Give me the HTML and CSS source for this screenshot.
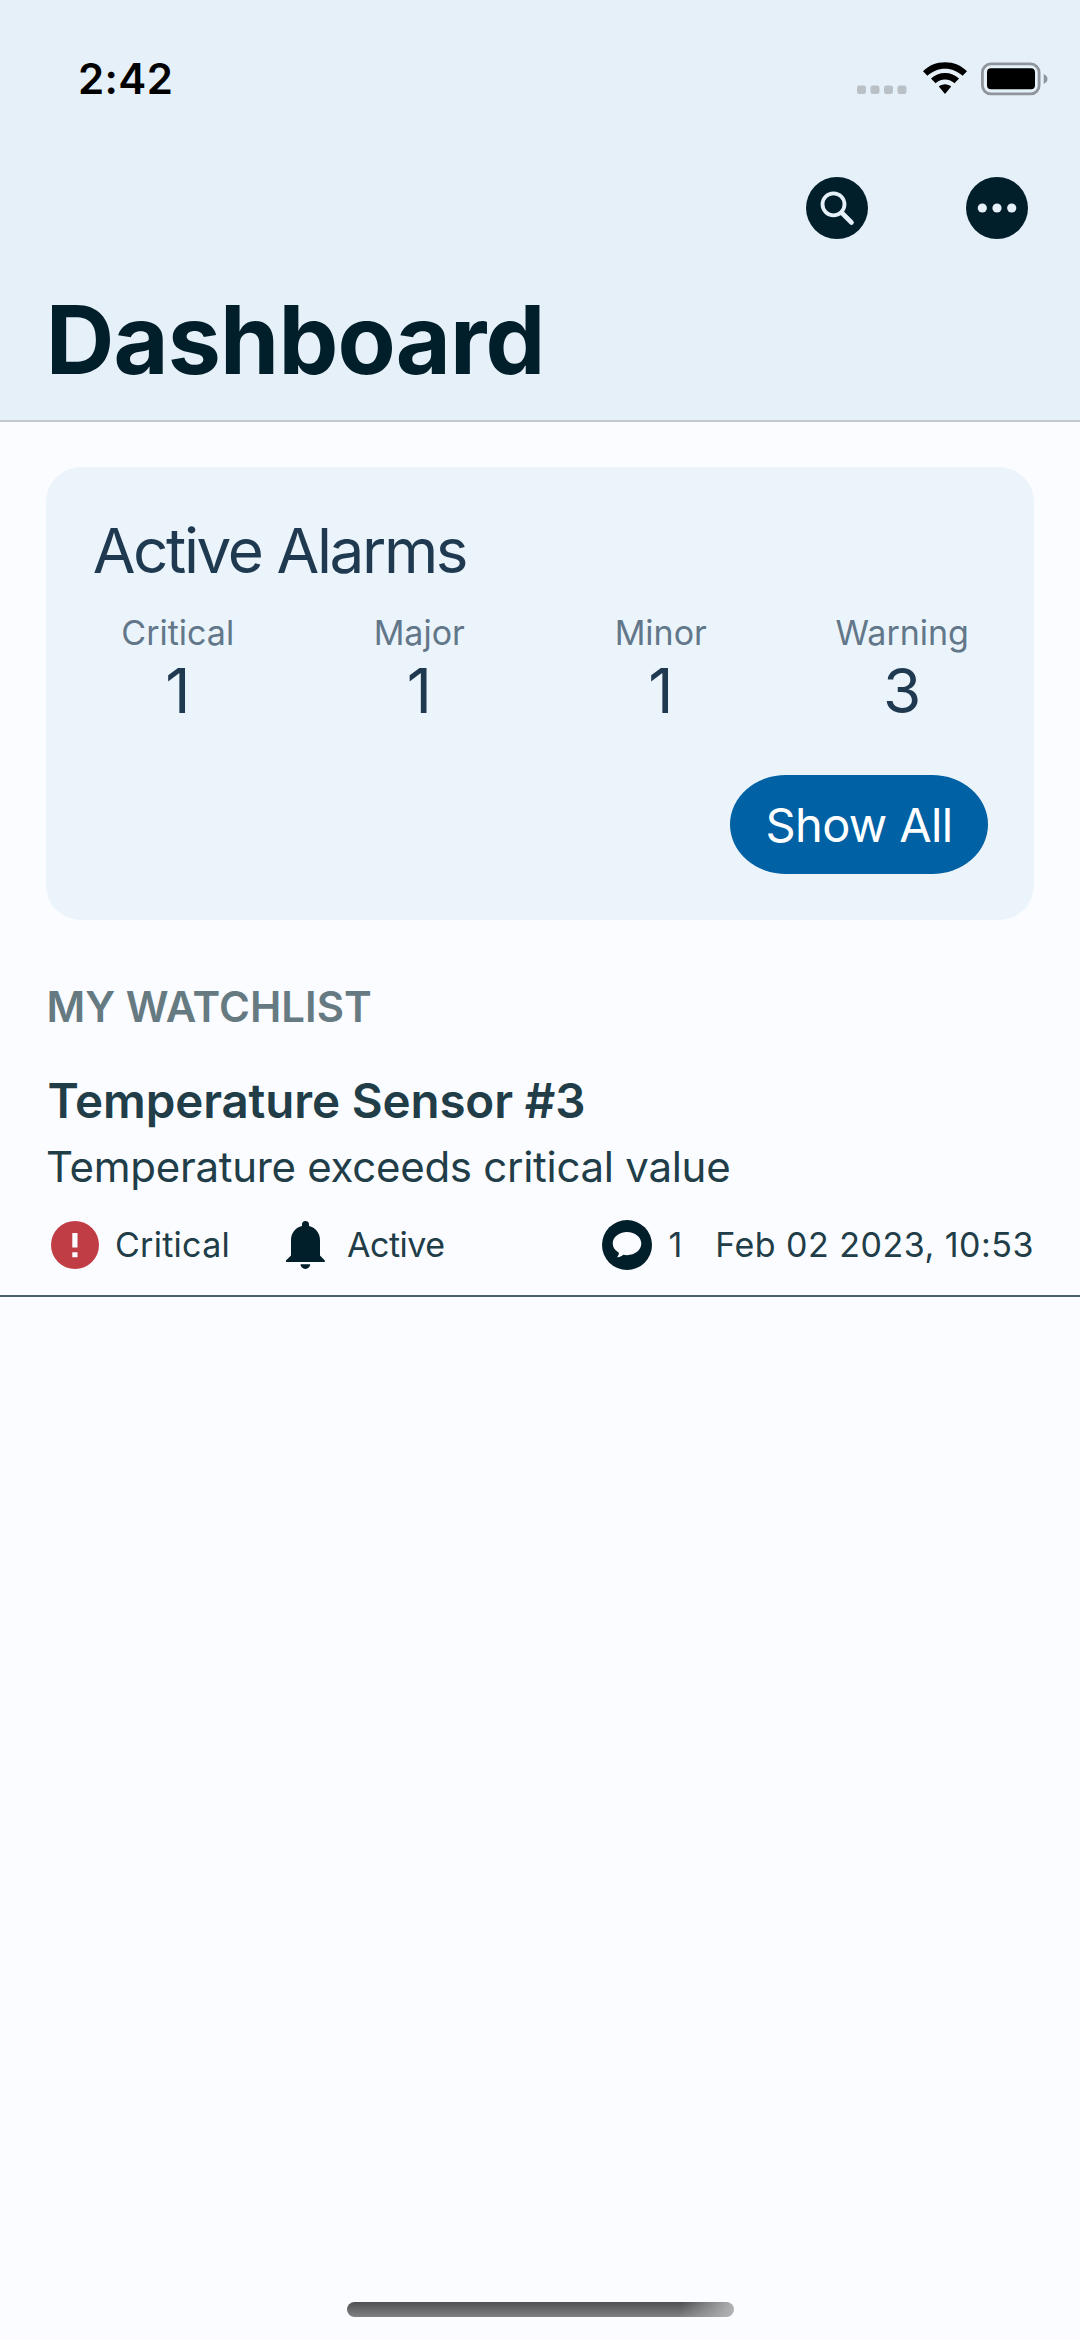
FILE: index.html
```html
<!DOCTYPE html>
<html lang="en">
<head>
<meta charset="utf-8">
<title>Dashboard</title>
<link rel="stylesheet" href="styles.css">
</head>
<body>
<div class="screen">
  <header class="header">
    <div class="status-bar">
      <span class="time">2:42</span>
      <div class="status-icons">
        <svg class="cell" width="50" height="34" viewBox="0 0 50 34"><g fill="#b9c0c6"><rect x="0" y="23.5" width="9" height="8.6" rx="2.4"/><rect x="13.5" y="23.5" width="9" height="8.6" rx="2.4"/><rect x="27" y="23.5" width="9" height="8.6" rx="2.4"/><rect x="40.5" y="23.5" width="9" height="8.6" rx="2.4"/></g></svg>
        <svg class="wifi" width="46" height="34" viewBox="0 0 46 34"><path d="M23 .3C31.500.3 39.300 3.600 45 9.200L40.600 13.800C36 9.400 29.800 6.700 23 6.700S10 9.400 5.400 13.800L1 9.200C6.700 3.600 14.500.3 23 .3zM23 11C28.400 11 33.300 13 37 16.500L32.500 21.200C30 18.900 26.700 17.500 23 17.500S16 18.900 13.500 21.200L9 16.500C12.700 13 17.600 11 23 11zM23 22.300C25.300 22.300 27.500 23.200 29.200 24.600L23 32 16.800 24.600C18.500 23.200 20.700 22.300 23 22.300z"/></svg>
        <svg class="battery" width="68" height="34" viewBox="0 0 68 34"><rect x="2.400" y="1.900" width="56.700" height="30" rx="8.500" fill="none" stroke="#8f959a" stroke-width="2.800"/><rect x="7" y="6.300" width="48" height="21" rx="4"/><path d="M63.700 12C66 13 67.500 14.700 67.500 17S66 21 63.700 22z" fill="#8f959a"/></svg>
      </div>
    </div>
    <nav class="toolbar">
      <svg width="62" height="62" viewBox="0 0 62 62"><circle cx="31" cy="31" r="31" fill="#001f2a"/><g fill="none" stroke="#e5f0f8" stroke-linecap="round"><circle cx="27.500" cy="27.300" r="11" stroke-width="3.800"/><path d="M36 36L45.500 45.500" stroke-width="4.600"/></g></svg>
      <svg width="62" height="62" viewBox="0 0 62 62"><circle cx="31" cy="31" r="31" fill="#001f2a"/><g fill="#e5f0f8"><circle cx="16.300" cy="31" r="4.600"/><circle cx="31" cy="31" r="4.600"/><circle cx="45.700" cy="31" r="4.600"/></g></svg>
    </nav>
    <h1 class="title">Dashboard</h1>
  </header>
  <main>
    <section class="card">
      <h2 class="card-title">Active Alarms</h2>
      <div class="counts">
        <div class="count"><span class="count-label">Critical</span><span class="count-value">1</span></div>
        <div class="count"><span class="count-label">Major</span><span class="count-value">1</span></div>
        <div class="count"><span class="count-label">Minor</span><span class="count-value">1</span></div>
        <div class="count"><span class="count-label">Warning</span><span class="count-value">3</span></div>
      </div>
      <button class="show-all">Show All</button>
    </section>
    <h2 class="section-title">MY WATCHLIST</h2>
    <article class="alarm">
      <h3 class="alarm-name">Temperature Sensor #3</h3>
      <p class="alarm-text">Temperature exceeds critical value</p>
      <div class="meta">
        <svg class="severity" width="48" height="48" viewBox="0 0 48 48"><circle cx="24" cy="24" r="24" fill="#c13d45"/><path d="M21.300 12h5.200v14.500h-5.200zM21.300 31.200h5.200v5h-5.200z" fill="#fbfcff"/></svg>
        <span class="severity-label">Critical</span>
        <svg class="bell" width="39" height="48" viewBox="0 0 39 48"><path d="M16 5V3.500a3.500 3.500 0 0 1 7 0V5C29.500 6.500 34 12 34 19V34.500L38.800 39.500V41H0V39.500L5 34.500V19C5 12 9.500 6.500 16 5zM14.500 43.300H24.200A4.850 4.700 0 0 1 14.500 43.300z" fill="#001f2a"/></svg>
        <span class="state-label">Active</span>
        <svg class="comment" width="50" height="50" viewBox="0 0 50 50"><circle cx="25" cy="25" r="25" fill="#001f2a"/><path d="M25 12C33 12 39.300 17.200 39.300 23.600S33 35.200 25 35.200C23.700 35.200 22.500 35.100 21.300 34.800 19.500 36.500 17.500 37.300 15 37.200 16.500 35.500 17 34 16.800 32.700 13 30.600 10.700 27.400 10.700 23.600 10.700 17.200 17 12 25 12z" fill="#fbfcff"/></svg>
        <span class="comment-count">1</span>
        <time class="date">Feb 02 2023, 10:53</time>
      </div>
    </article>
  </main>
  <div class="home"></div>
</div>
</body>
</html>
```
FILE: styles.css
```css
* { box-sizing: border-box; margin: 0; padding: 0; }
body { background: #fbfcff; font-family: Inter, "Liberation Sans", sans-serif; }
h1, h2, h3 { font-weight: 400; }
svg { display: block; flex: none; }
span, time { white-space: nowrap; }
.screen { width: 1080px; height: 2340px; display: flex; flex-direction: column; background: #fbfcff; }
.header { height: 422px; background: #e5f0f8; border-bottom: 2px solid #c3cacf; padding: 53px 0 0; }
.status-bar { display: flex; justify-content: space-between; height: 52px; padding: 0 32px 0 78px; }
.time { font-size: 42px; line-height: 52px; font-weight: 600; letter-spacing: 0.4px; color: #000; }
.status-icons { display: flex; padding-top: 9px; }
.wifi { margin-left: 15px; }
.battery { margin-left: 12px; }
.toolbar { display: flex; justify-content: flex-end; gap: 98px; padding: 72px 52px 0 0; }
.title { margin: 44px 0 0 45.700px; font-size: 95px; line-height: 114px; font-weight: 700; letter-spacing: -0.85px; color: #001f2a; }
.card { margin: 45px 46px 0; height: 453px; border-radius: 35px; background: #ecf4fb; padding: 47px 11px 0; display: flex; flex-direction: column; }
.card-title { margin-left: 35.700px; font-size: 62px; line-height: 74px; letter-spacing: -2.4px; color: #1f3a50; }
.counts { display: grid; grid-template-columns: repeat(4, 1fr); margin-top: 23px; }
.count { display: flex; flex-direction: column; align-items: center; }
.count-label { font-size: 34px; line-height: 43px; color: #627789; }
.count-value { font-size: 62px; line-height: 74px; color: #1f3a50; }
.show-all { align-self: flex-end; margin: 47px 35px 0 0; width: 258px; height: 99px; border: 0; border-radius: 56px / 49.5px; background: #0061a4; color: #fff; font: 47px/58px Inter, sans-serif; letter-spacing: -0.65px; }
.section-title { margin: 62px 0 0 46.400px; font-size: 42px; line-height: 50px; font-weight: 600; color: #667a82; }
.alarm { margin-top: 40px; height: 225px; padding: 0 46px; border-bottom: 2px solid #4a606a; }
.alarm-name { padding-left: 1.500px; font-size: 47.500px; line-height: 58px; font-weight: 600; letter-spacing: -0.12px; color: #203d48; }
.alarm-text { margin-top: 12px; font-size: 42px; line-height: 50px; letter-spacing: -0.28px; color: #203d48; }
.meta { display: flex; align-items: center; height: 50px; margin-top: 28px; font-size: 34px; line-height: 42px; color: #203d48; }
.severity { margin-left: 5px; }
.severity-label { margin-left: 16px; letter-spacing: 0.27px; }
.bell { margin-left: 56px; }
.state-label { margin-left: 22px; letter-spacing: -0.5px; }
.comment { margin-left: auto; }
.comment-count { margin-left: 16px; }
.date { margin-left: 33px; letter-spacing: 0.49px; }
.home { margin: auto auto 23px; width: 387px; height: 15px; border-radius: 8px; background: linear-gradient(100deg, transparent 86%, #b4b5b7 100%), linear-gradient(#4f5052, #808183); }
```
